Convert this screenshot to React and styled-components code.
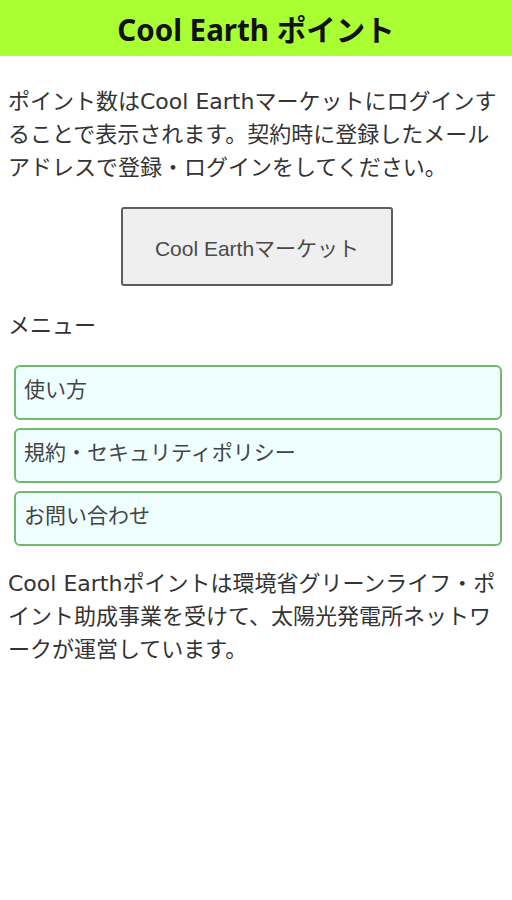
import React from "react";
import styled, { createGlobalStyle } from "styled-components";

const Global = createGlobalStyle`
  html, body { margin: 0; padding: 0; background: #ffffff; }
  body { font-family: "DejaVu Sans", "Noto Sans CJK JP", sans-serif; }
  * { box-sizing: border-box; }
`;

const Header = styled.header`
  height: 56px;
  background: #aaff33;
  display: flex;
  align-items: center;
  justify-content: center;
`;

const Title = styled.h1`
  margin: 0;
  font-family: "Noto Sans", "Noto Sans CJK JP", sans-serif;
  font-size: 29.5px;
  font-weight: 700;
  color: #111111;
  letter-spacing: 0;
`;

const Main = styled.main`
  padding: 0 8px;
  display: flex;
  flex-direction: column;
`;

const Text = styled.p`
  margin: ${(p) => p.$top}px 0 0;
  font-size: 22px;
  line-height: 33px;
  color: #333333;
`;

const ButtonRow = styled.div`
  display: flex;
  justify-content: center;
  margin-top: 23px;
`;

const MarketButton = styled.button`
  width: 272px;
  height: 79px;
  margin-left: 2px;
  background: #efefef;
  border: 2px solid #5e5e5e;
  border-radius: 3px;
  font-family: "Liberation Sans", "Noto Sans CJK JP", sans-serif;
  font-size: 21px;
  color: #4a4a4a;
  padding: 0;
`;

const MenuLabel = styled.div`
  margin-top: 23px;
  font-size: 22px;
  line-height: 33px;
  color: #333333;
`;

const MenuList = styled.nav`
  margin: 23px 2px 0 6px;
  display: flex;
  flex-direction: column;
  gap: 8px;
`;

const MenuItem = styled.a`
  display: block;
  height: 55px;
  padding: 7px 8px 0 8px;
  background: #efffff;
  border: 2px solid #72b872;
  border-radius: 6px;
  font-size: 21px;
  line-height: 33px;
  color: #444444;
  text-decoration: none;
`;

const items = ["使い方", "規約・セキュリティポリシー", "お問い合わせ"];

export default function App() {
  return (
    <>
      <Global />
      <Header>
        <Title>Cool Earth ポイント</Title>
      </Header>
      <Main>
        <Text $top={29}>
          ポイント数はCool Earthマーケットにログインすることで表示されます。契約時に登録したメールアドレスで登録・ログインをしてください。
        </Text>
        <ButtonRow>
          <MarketButton>Cool Earthマーケット</MarketButton>
        </ButtonRow>
        <MenuLabel>メニュー</MenuLabel>
        <MenuList>
          {items.map((t) => (
            <MenuItem key={t} href="#">
              {t}
            </MenuItem>
          ))}
        </MenuList>
        <Text $top={21}>
          Cool Earthポイントは環境省グリーンライフ・ポイント助成事業を受けて、太陽光発電所ネットワークが運営しています。
        </Text>
      </Main>
    </>
  );
}
